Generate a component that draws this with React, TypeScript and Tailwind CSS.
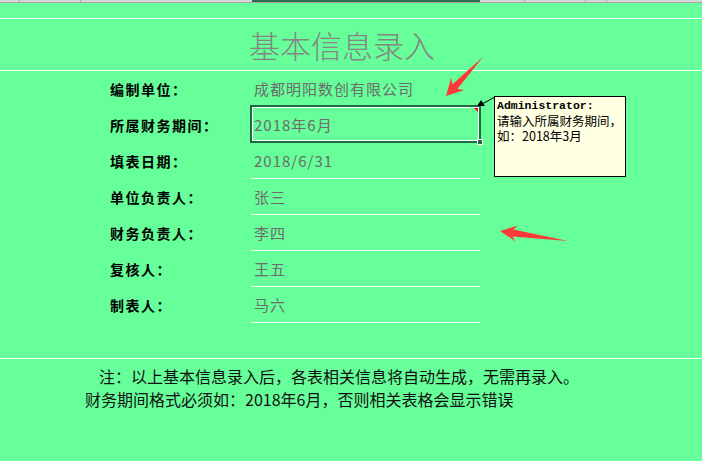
import React from "react";

const rows = [
  { label: "编制单位：", value: "成都明阳数创有限公司" },
  { label: "所属财务期间：", value: "2018年6月" },
  { label: "填表日期：", value: "2018/6/31" },
  { label: "单位负责人：", value: "张三" },
  { label: "财务负责人：", value: "李四" },
  { label: "复核人：", value: "王五" },
  { label: "制表人：", value: "马六" },
];

const cjk = { fontFamily: '"Noto Sans CJK SC", "Noto Sans", sans-serif' };

const App = () => {
  return (
    <div
      className="relative w-[702px] h-[461px] overflow-hidden bg-[#66ff99] text-black"
      style={cjk}
    >
      {/* column header strip */}
      <div className="flex h-[3px] bg-[#d6d6d6] border-b border-[#a6a6a6]">
        <div className="w-[20px] border-r border-[#a6a6a6]" />
        <div className="w-[61px] border-r border-[#a6a6a6]" />
        <div className="w-[171px]" />
        <div className="w-[228px] bg-[#2d6e4a]" />
        <div className="w-[45px] border-r border-[#a6a6a6]" />
        <div className="w-[61px] border-r border-[#a6a6a6]" />
        <div className="w-[21px] border-r border-[#a6a6a6]" />
        <div className="flex-1" />
      </div>

      <div className="h-[15px]" />
      <div className="h-px bg-white" />

      <div className="h-[51px] flex items-center pl-[249px] text-[31px] leading-none text-[#858585] font-light">
        基本信息录入
      </div>
      <div className="h-px bg-white" />

      <div className="flex flex-col">
        {rows.map((r) => (
          <div key={r.label} className="flex h-[36px]">
            <div className="w-[251px] pl-[110px] flex items-center text-[14px] font-bold tracking-[1.5px] pt-[1px]">
              {r.label}
            </div>
            <div className="w-[229px] border-b border-white flex items-center pl-[3px] text-[15px] tracking-[1px] text-[#6c6c6c] pt-[1px]">
              {r.value}
            </div>
          </div>
        ))}
      </div>

      <div className="h-[35px]" />
      <div className="h-px bg-white" />

      <div className="pt-[6px] pl-[85px] text-[16px] leading-[23px] text-[#111]">
        <div className="pl-[14px]">
          注：以上基本信息录入后，各表相关信息将自动生成，无需再录入。
        </div>
        <div>财务期间格式必须如：2018年6月，否则相关表格会显示错误</div>
      </div>

      {/* selected cell */}
      <div className="absolute left-[250px] top-[105px] w-[231px] h-[38px] border-2 border-[#1f6b45]">
        <div className="w-full h-full border border-white" />
        <div className="absolute right-[1px] top-[1px] w-0 h-0 border-l-[4px] border-l-transparent border-t-[4px] border-t-[#ff0000]" />
        <div className="absolute right-[-4px] bottom-[-4px] w-[6px] h-[6px] bg-[#1f6b45] border border-white" />
      </div>

      {/* comment box */}
      <div className="absolute left-[494px] top-[96px] w-[132px] h-[81px] bg-[#ffffe1] border border-black pl-[2px] pt-[2px]">
        <div
          className="text-[11.5px] font-bold leading-[14px]"
          style={{ fontFamily: '"Liberation Mono", "DejaVu Sans Mono", monospace' }}
        >
          Administrator:
        </div>
        <div className="text-[12.5px] leading-[15px] whitespace-nowrap">请输入所属财务期间，</div>
        <div className="text-[12.5px] leading-[15px]">如：2018年3月</div>
      </div>

      {/* connector + red arrows */}
      <svg
        className="absolute left-0 top-0 pointer-events-none"
        width="702"
        height="461"
        viewBox="0 0 702 461"
      >
        <line x1="495" y1="97" x2="482" y2="104" stroke="#000" strokeWidth="1" />
        <polygon points="481,100 485,106 477,106" fill="#000" />
        <polygon
          points="483,57 457.4,89 464.2,89.9 446,96 451.2,77.5 452.4,84.2"
          fill="#ff3838"
        />
        <polygon
          points="568,241 513.4,229.4 518,225.6 500,231 515.6,241.4 512.4,236.4"
          fill="#ff3838"
        />
      </svg>
    </div>
  );
};

export default App;
